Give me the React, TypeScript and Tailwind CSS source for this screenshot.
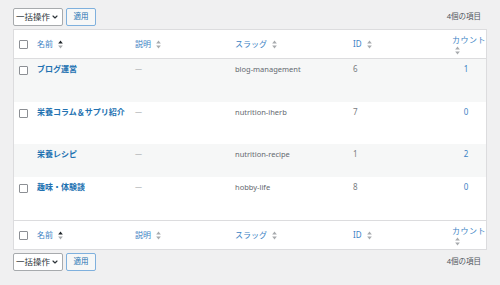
import { ChevronDown } from 'lucide-react';

type Term = {
  name: string;
  slug: string;
  id: number;
  count: number;
  canDelete: boolean;
  height: string;
};

const terms: Term[] = [
  { name: 'ブログ運営', slug: 'blog-management', id: 6, count: 1, canDelete: true, height: 'h-[43px]' },
  { name: '栄養コラム＆サプリ紹介', slug: 'nutrition-iherb', id: 7, count: 0, canDelete: true, height: 'h-[42px]' },
  { name: '栄養レシピ', slug: 'nutrition-recipe', id: 1, count: 2, canDelete: false, height: 'h-[33px]' },
  { name: '趣味・体験談', slug: 'hobby-life', id: 8, count: 0, canDelete: true, height: 'h-[43px]' },
];

const cols = 'grid grid-cols-[23px_98px_100px_118px_92px_42px]';

function SortIcon({ active = false }: { active?: boolean }) {
  return (
    <svg width="5" height="9" viewBox="0 0 5 9" className="shrink-0">
      <path d="M2.5 0.5 L4.8 3.6 L0.2 3.6 Z" fill={active ? '#1d2327' : '#a7aaad'} />
      <path d="M2.5 8.5 L4.8 5.4 L0.2 5.4 Z" fill="#a7aaad" />
    </svg>
  );
}

function Checkbox() {
  return (
    <div className="w-[9px] h-[9px] rounded-[1px] border border-[#8c8f94] bg-white" />
  );
}

function BulkBar() {
  return (
    <div className="flex items-center h-[18px]">
      <div className="flex items-center h-[18px] w-[50px] pl-[2px] pr-[3px] justify-between bg-white border border-[#a7aaad] rounded-[2px] text-[8.5px] text-[#2c3338]">
        <span>一括操作</span>
        <ChevronDown size={8} strokeWidth={3.5} className="text-[#2c3338]" />
      </div>
      <div className="ml-[3px] flex items-center justify-center h-[18px] w-[30px] bg-[#f6f7f7] border border-[#7fb0dd] rounded-[2px] text-[7.5px] text-[#2271b1]">
        適用
      </div>
      <div className="ml-auto pr-[6px] text-[7.5px] text-[#50575e]">4個の項目</div>
    </div>
  );
}

function HeaderRow({ bottomBorder }: { bottomBorder: boolean }) {
  return (
    <div
      className={`${cols} h-[29px] items-center text-[8px] text-[#3c82c4] ${
        bottomBorder ? 'border-b border-[#dcdcde]' : 'border-t border-[#dcdcde]'
      }`}
    >
      <div className="pl-[5px] flex items-center">
        <Checkbox />
      </div>
      <div className="flex items-center gap-[5px]">
        <span>名前</span>
        <SortIcon active />
      </div>
      <div className="flex items-center gap-[5px]">
        <span>説明</span>
        <SortIcon />
      </div>
      <div className="flex items-center gap-[5px]">
        <span>スラッグ</span>
        <SortIcon />
      </div>
      <div className="flex items-center gap-[5px]">
        <span>ID</span>
        <SortIcon />
      </div>
      <div className="flex flex-col items-start pl-[7px] leading-[11px]">
        <span className="tracking-[0.5px]">カウント</span>
        <span className="pl-[3px] mt-[1px]">
          <SortIcon />
        </span>
      </div>
    </div>
  );
}

export default function App() {
  return (
    <div
      className="w-[500px] h-[285px] bg-[#f0f0f1] pt-[8px] px-[13px] overflow-hidden"
      style={{ fontFamily: '"Noto Sans", "Noto Sans CJK JP", sans-serif' }}
    >
      <BulkBar />

      <div className="mt-[3px] bg-white border border-[#dcdcde]">
        <HeaderRow bottomBorder />

        {terms.map((t, i) => (
          <div
            key={t.id}
            className={`${cols} ${t.height} items-start text-[8px] leading-[12px] ${
              i % 2 === 0 ? 'bg-[#f6f7f7]' : 'bg-white'
            }`}
          >
            <div className="pl-[5px] pt-[7px]">{t.canDelete && <Checkbox />}</div>
            <div className="pt-[4px] font-bold text-[#2271b1] whitespace-nowrap">{t.name}</div>
            <div className="pt-[4px] text-[#a7aaad] text-[7px]">—</div>
            <div className="pt-[4px] text-[#646970] text-[7.5px]">{t.slug}</div>
            <div className="pt-[4px] text-[#787c82]">{t.id}</div>
            <div className="pt-[4px] text-center text-[#3c82c4]">{t.count}</div>
          </div>
        ))}

        <HeaderRow bottomBorder={false} />
      </div>

      <div className="mt-[3px]">
        <BulkBar />
      </div>
    </div>
  );
}
